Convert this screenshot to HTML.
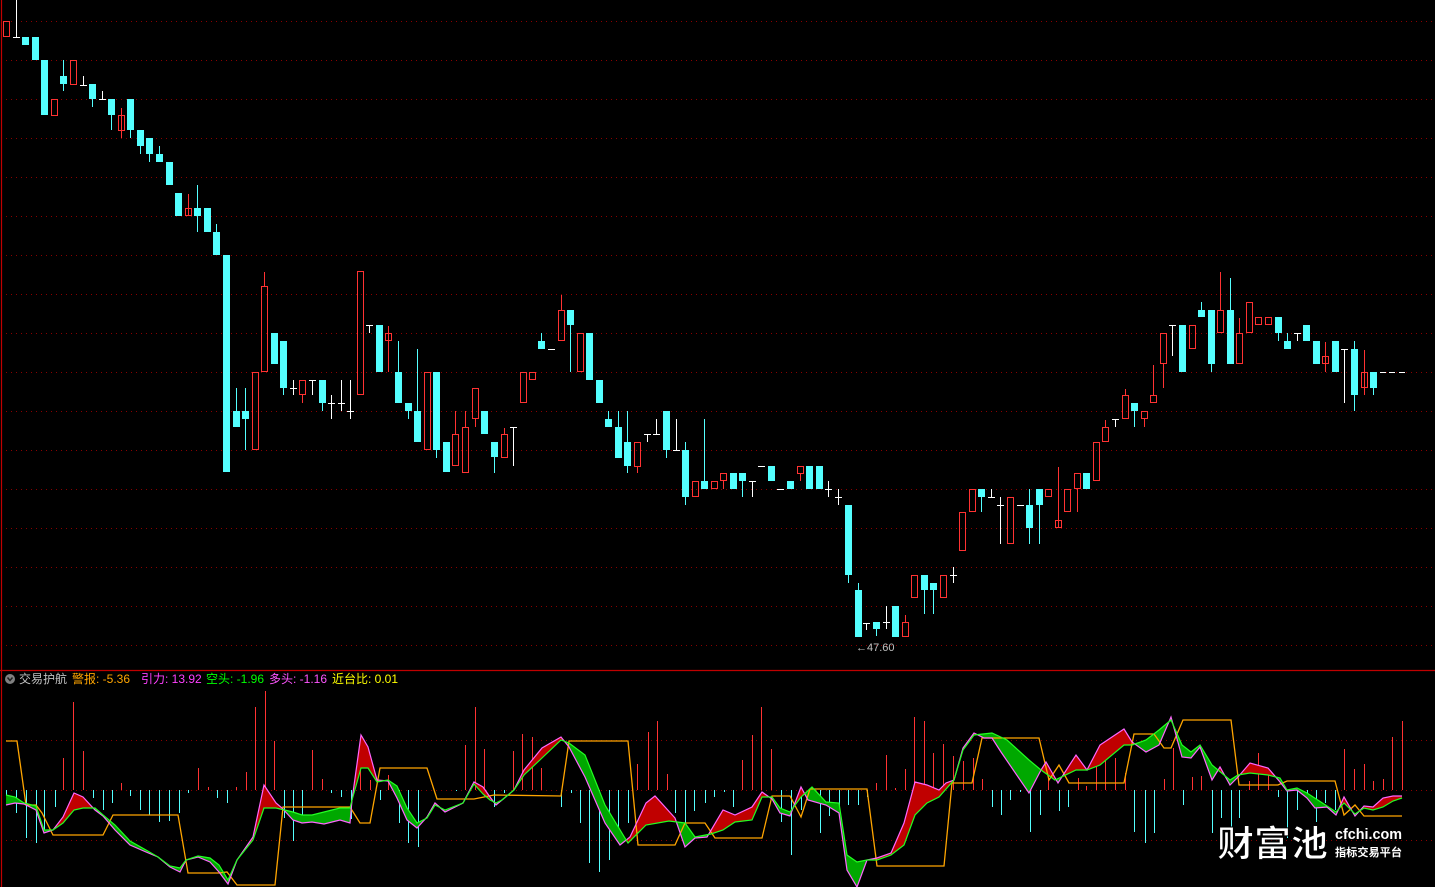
<!DOCTYPE html>
<html><head><meta charset="utf-8"><style>
html,body{margin:0;padding:0;background:#000;width:1435px;height:887px;overflow:hidden}
svg{display:block}
</style></head><body>
<svg width="1435" height="887" viewBox="0 0 1435 887" xmlns="http://www.w3.org/2000/svg">
<rect width="1435" height="887" fill="#000"/>
<g stroke="#8a0000" stroke-width="1" stroke-dasharray="1,4" fill="none">
<path d="M6 21.5H1435M6 60.5H1435M6 99.5H1435M6 138.5H1435M6 177.5H1435M6 216.5H1435M6 255.5H1435M6 294.5H1435M6 333.5H1435M6 372.5H1435M6 411.5H1435M6 450.5H1435M6 489.5H1435M6 528.5H1435M6 567.5H1435M6 606.5H1435M6 645.5H1435M6 740.5H1435M6 790.5H1435M6 840.5H1435"/>
</g>
<path d="M1.5 0V887M0 670.5H1435" stroke="#c00000" stroke-width="1.2" fill="none"/>

<g shape-rendering="crispEdges" fill="none" stroke-width="1">
<path stroke="#54ffff" d="M63.5 60V91M92.5 84V107M111.5 99V130M130.5 99V138M140.5 130V154M149.5 138V162M159.5 146V162M197.5 185V232M216.5 224V255M236.5 388V427M245.5 388V450M283.5 341V395M322.5 380V411M398.5 341V403M408.5 403V419M417.5 349V442M436.5 372V458M494.5 442V473M541.5 333V349M570.5 310V372M608.5 411V427M618.5 411V458M627.5 411V473M666.5 411V458M685.5 442V505M704.5 419V489M742.5 473V497M848.5 505V583M858.5 583V637M876.5 622V636M924.5 575V614M933.5 583V614M981.5 489V512M1029.5 489V544M1039.5 489V544M1134.5 403V427M1201.5 302V317M1211.5 310V372M1230.5 278V364M1278.5 317V341M1287.5 333V349M1354.5 341V411M1373.5 372V395"/>
<path stroke="#ff3232" d="M121.5 108V138M188.5 194V216M264.5 272V286M302.5 395V403M388.5 326V372M455.5 411V434M465.5 411V427M475.5 419V427M504.5 428V434M561.5 295V310M637.5 467V473M723.5 481V489M800.5 474V481M905.5 615V622M1058.5 467V528M1077.5 489V512M1105.5 420V427M1125.5 389V395M1144.5 419V427M1153.5 365V395M1163.5 364V388M1220.5 272V310M1239.5 318V333M1325.5 342V372M1364.5 350V395"/>
<path stroke="#ffffff" d="M16.5 0V37M13 37.5H20M83.5 76V85M80 85.5H87M102.5 91V99M99 99.5H106M293.5 380V395M290 388.5H297M312.5 380V395M309 380.5H316M331.5 395V419M328 403.5H335M341.5 380V411M338 403.5H345M350.5 380V419M347 411.5H354M369.5 325V333M366 325.5H373M513.5 427V466M510 427.5H517M548 349.5H555M647.5 434V442M644 434.5H651M656.5 419V434M653 434.5H660M676.5 419V450M673 450.5H680M752.5 481V497M749 481.5H756M758 466.5H765M777 489.5H784M828.5 481V497M825 489.5H832M838.5 489V505M835 497.5H842M866.5 623V630M863 623.5H870M886.5 606V629M883 622.5H890M953.5 567V583M950 575.5H957M991.5 489V497M988 497.5H995M1000.5 497V544M997 505.5H1004M1017 505.5H1024M1115.5 419V427M1112 419.5H1119M1172.5 325V356M1169 325.5H1176M1297.5 333V341M1294 333.5H1301M1344.5 349V403M1341 349.5H1348M1380 372.5H1386M1389 372.5H1395M1399 372.5H1405"/>
</g>
<g fill="#54ffff" shape-rendering="crispEdges">
<rect x="22" y="37" width="7" height="8"/><rect x="32" y="37" width="7" height="23"/><rect x="41" y="60" width="7" height="55"/><rect x="60" y="76" width="7" height="8"/><rect x="89" y="84" width="7" height="15"/><rect x="108" y="99" width="7" height="16"/><rect x="127" y="99" width="7" height="31"/><rect x="137" y="130" width="7" height="16"/><rect x="146" y="138" width="7" height="16"/><rect x="156" y="154" width="7" height="8"/><rect x="166" y="162" width="7" height="23"/><rect x="175" y="193" width="7" height="23"/><rect x="194" y="208" width="7" height="8"/><rect x="204" y="208" width="7" height="24"/><rect x="213" y="232" width="7" height="23"/><rect x="223" y="255" width="7" height="217"/><rect x="233" y="411" width="7" height="16"/><rect x="242" y="411" width="7" height="8"/><rect x="271" y="333" width="7" height="31"/><rect x="280" y="341" width="7" height="47"/><rect x="319" y="380" width="7" height="23"/><rect x="376" y="325" width="7" height="47"/><rect x="395" y="372" width="7" height="31"/><rect x="405" y="403" width="7" height="8"/><rect x="414" y="411" width="7" height="31"/><rect x="433" y="372" width="7" height="78"/><rect x="443" y="442" width="7" height="30"/><rect x="481" y="411" width="7" height="23"/><rect x="491" y="442" width="7" height="15"/><rect x="538" y="341" width="7" height="8"/><rect x="567" y="310" width="7" height="15"/><rect x="586" y="333" width="7" height="47"/><rect x="596" y="380" width="7" height="23"/><rect x="605" y="419" width="7" height="8"/><rect x="615" y="427" width="7" height="31"/><rect x="624" y="442" width="7" height="24"/><rect x="663" y="411" width="7" height="39"/><rect x="682" y="450" width="7" height="47"/><rect x="701" y="481" width="7" height="8"/><rect x="730" y="473" width="7" height="16"/><rect x="739" y="473" width="7" height="8"/><rect x="768" y="466" width="7" height="15"/><rect x="787" y="481" width="7" height="8"/><rect x="806" y="466" width="7" height="23"/><rect x="816" y="466" width="7" height="23"/><rect x="845" y="505" width="7" height="70"/><rect x="855" y="590" width="7" height="47"/><rect x="873" y="622" width="7" height="7"/><rect x="892" y="606" width="7" height="31"/><rect x="921" y="575" width="7" height="15"/><rect x="930" y="583" width="7" height="7"/><rect x="978" y="489" width="7" height="8"/><rect x="1026" y="505" width="7" height="23"/><rect x="1036" y="489" width="7" height="16"/><rect x="1083" y="473" width="7" height="16"/><rect x="1131" y="403" width="7" height="8"/><rect x="1179" y="325" width="7" height="47"/><rect x="1198" y="310" width="7" height="7"/><rect x="1208" y="310" width="7" height="54"/><rect x="1227" y="310" width="7" height="54"/><rect x="1275" y="317" width="7" height="16"/><rect x="1284" y="341" width="7" height="8"/><rect x="1303" y="325" width="7" height="16"/><rect x="1313" y="341" width="7" height="23"/><rect x="1332" y="341" width="7" height="31"/><rect x="1351" y="349" width="7" height="46"/><rect x="1370" y="372" width="7" height="16"/>
</g>
<g fill="none" stroke="#ff3232" stroke-width="1" shape-rendering="crispEdges">
<rect x="3.5" y="21.5" width="6" height="15"/><rect x="51.5" y="99.5" width="6" height="16"/><rect x="70.5" y="60.5" width="6" height="24"/><rect x="118.5" y="115.5" width="6" height="15"/><rect x="185.5" y="208.5" width="6" height="7"/><rect x="252.5" y="372.5" width="6" height="77"/><rect x="261.5" y="286.5" width="6" height="85"/><rect x="299.5" y="380.5" width="6" height="14"/><rect x="357.5" y="271.5" width="6" height="123"/><rect x="385.5" y="333.5" width="6" height="7"/><rect x="424.5" y="372.5" width="6" height="77"/><rect x="452.5" y="434.5" width="6" height="31"/><rect x="462.5" y="427.5" width="6" height="45"/><rect x="472.5" y="388.5" width="6" height="30"/><rect x="501.5" y="434.5" width="6" height="23"/><rect x="520.5" y="372.5" width="6" height="30"/><rect x="529.5" y="372.5" width="6" height="7"/><rect x="558.5" y="310.5" width="6" height="30"/><rect x="577.5" y="333.5" width="6" height="38"/><rect x="634.5" y="442.5" width="6" height="24"/><rect x="692.5" y="481.5" width="6" height="15"/><rect x="711.5" y="481.5" width="6" height="7"/><rect x="720.5" y="473.5" width="6" height="7"/><rect x="797.5" y="466.5" width="6" height="7"/><rect x="902.5" y="622.5" width="6" height="14"/><rect x="911.5" y="575.5" width="6" height="22"/><rect x="940.5" y="575.5" width="6" height="22"/><rect x="959.5" y="512.5" width="6" height="38"/><rect x="969.5" y="489.5" width="6" height="22"/><rect x="1007.5" y="497.5" width="6" height="46"/><rect x="1045.5" y="489.5" width="6" height="7"/><rect x="1055.5" y="520.5" width="6" height="7"/><rect x="1064.5" y="489.5" width="6" height="22"/><rect x="1074.5" y="473.5" width="6" height="15"/><rect x="1093.5" y="442.5" width="6" height="38"/><rect x="1102.5" y="427.5" width="6" height="14"/><rect x="1122.5" y="395.5" width="6" height="23"/><rect x="1141.5" y="411.5" width="6" height="7"/><rect x="1150.5" y="395.5" width="6" height="7"/><rect x="1160.5" y="333.5" width="6" height="30"/><rect x="1189.5" y="325.5" width="6" height="23"/><rect x="1217.5" y="310.5" width="6" height="22"/><rect x="1236.5" y="333.5" width="6" height="30"/><rect x="1246.5" y="302.5" width="6" height="30"/><rect x="1255.5" y="317.5" width="6" height="7"/><rect x="1265.5" y="317.5" width="6" height="7"/><rect x="1322.5" y="356.5" width="6" height="7"/><rect x="1361.5" y="372.5" width="6" height="15"/>
</g>
<text x="856" y="651" font-family="Liberation Sans, sans-serif" font-size="11" fill="#c0c0c0">←47.60</text>

<g stroke-width="1" fill="none" shape-rendering="crispEdges">
<path stroke="#ff3232" d="M63.5 790V758M73.5 790V702M83.5 790V751M121.5 790V783M198.5 790V768M208.5 790V787M236.5 790V787M246.5 790V772M255.5 790V707M265.5 790V691M274.5 790V741M312.5 790V750M322.5 790V779M360.5 790V753M370.5 790V780M388.5 790V775M465.5 790V745M475.5 790V707M484.5 790V749M513.5 790V751M522.5 790V734M532.5 790V737M541.5 790V768M637.5 790V764M648.5 790V732M657.5 790V721M667.5 790V774M742.5 790V760M752.5 790V735M761.5 790V707M771.5 790V749M876.5 790V783M886.5 790V755M895.5 790V788M905.5 790V769M914.5 790V717M924.5 790V721M933.5 790V753M943.5 790V744M953.5 790V756M963.5 790V761M973.5 790V758M982.5 790V779M1048.5 790V777M1078.5 790V778M1086.5 790V786M1096.5 790V761M1105.5 790V760M1115.5 790V758M1125.5 790V773M1164.5 790V779M1173.5 790V748M1192.5 790V777M1201.5 790V776M1249.5 790V781M1258.5 790V753M1268.5 790V768M1344.5 790V749M1354.5 790V769M1364.5 790V764M1373.5 790V781M1383.5 790V779M1392.5 790V737M1402.5 790V721"/>
<path stroke="#54ffff" d="M6.5 790V805M16.5 790V813M26.5 790V838M36.5 790V843M44.5 790V832M55.5 790V807M93.5 790V798M103.5 790V810M112.5 790V803M130.5 790V796M140.5 790V810M149.5 790V815M159.5 790V822M169.5 790V821M179.5 790V813M188.5 790V793M217.5 790V798M227.5 790V803M284.5 790V818M293.5 790V841M302.5 790V822M331.5 790V793M341.5 790V797M351.5 790V819M380.5 790V800M399.5 790V823M408.5 790V843M418.5 790V847M456.5 790V791M484.5 790V796M494.5 790V807M504.5 790V793M561.5 790V807M571.5 790V793M580.5 790V823M589.5 790V863M599.5 790V872M609.5 790V860M618.5 790V842M628.5 790V823M675.5 790V813M685.5 790V842M694.5 790V811M705.5 790V803M714.5 790V797M724.5 790V792M733.5 790V807M781.5 790V822M791.5 790V855M801.5 790V810M810.5 790V798M820.5 790V833M829.5 790V816M839.5 790V807M848.5 790V805M858.5 790V805M867.5 790V797M992.5 790V807M1001.5 790V815M1010.5 790V800M1020.5 790V792M1030.5 790V832M1040.5 790V815M1059.5 790V811M1068.5 790V807M1134.5 790V832M1145.5 790V843M1154.5 790V833M1183.5 790V805M1212.5 790V833M1221.5 790V818M1231.5 790V833M1239.5 790V818M1278.5 790V797M1287.5 790V838M1297.5 790V810M1307.5 790V797M1316.5 790V822M1325.5 790V803M1335.5 790V810"/>
</g>

<defs>
<clipPath id="above"><polygon points="0,680 6,795 15,797 24,803 36,806 44,830 53,830 63,823 74,810 83,808 95,808 103,815 115,825 130,841 146,850 158,857 170,866 180,868 186,860 198,856 210,858 219,865 228,880 237,860 253,840 264,808 276,808 293,812 302,815 312,815 324,812 340,808 350,808 352,800 361,768 368,768 377,782 388,780 397,786 407,808 417,823 427,818 435,805 445,810 463,803 474,784 483,794 490,800 496,803 502,800 514,790 524,775 542,758 561,740 569,743 585,755 605,805 628,843 646,825 669,821 685,823 695,837 711,834 723,830 735,822 752,820 762,797 772,797 780,808 790,812 801,797 812,787 826,802 839,803 847,855 857,862 867,860 877,860 891,855 904,845 915,815 927,803 939,797 954,780 963,750 974,735 992,733 1007,740 1029,760 1041,770 1055,780 1076,770 1087,770 1100,765 1124,745 1132,745 1146,740 1159,730 1171,720 1182,745 1191,752 1200,745 1212,765 1230,780 1238,775 1250,773 1268,775 1280,778 1287,790 1297,788 1307,793 1327,806 1336,812 1344,803 1355,814 1364,808 1373,810 1383,807 1393,801 1402,798 1435,680"/></clipPath>
<clipPath id="below"><polygon points="0,887 6,795 15,797 24,803 36,806 44,830 53,830 63,823 74,810 83,808 95,808 103,815 115,825 130,841 146,850 158,857 170,866 180,868 186,860 198,856 210,858 219,865 228,880 237,860 253,840 264,808 276,808 293,812 302,815 312,815 324,812 340,808 350,808 352,800 361,768 368,768 377,782 388,780 397,786 407,808 417,823 427,818 435,805 445,810 463,803 474,784 483,794 490,800 496,803 502,800 514,790 524,775 542,758 561,740 569,743 585,755 605,805 628,843 646,825 669,821 685,823 695,837 711,834 723,830 735,822 752,820 762,797 772,797 780,808 790,812 801,797 812,787 826,802 839,803 847,855 857,862 867,860 877,860 891,855 904,845 915,815 927,803 939,797 954,780 963,750 974,735 992,733 1007,740 1029,760 1041,770 1055,780 1076,770 1087,770 1100,765 1124,745 1132,745 1146,740 1159,730 1171,720 1182,745 1191,752 1200,745 1212,765 1230,780 1238,775 1250,773 1268,775 1280,778 1287,790 1297,788 1307,793 1327,806 1336,812 1344,803 1355,814 1364,808 1373,810 1383,807 1393,801 1402,798 1435,887"/></clipPath>
<polygon id="band" points="6,805 15,803 24,804 36,810 44,833 53,830 63,817 74,793 83,797 95,810 103,816 115,830 130,845 146,852 158,857 170,867 180,872 186,860 198,857 210,862 219,872 228,884 237,860 253,837 264,785 276,803 282,808 293,820 302,823 312,822 324,824 340,820 350,823 352,800 361,735 368,747 377,780 388,781 397,798 407,820 417,828 427,817 435,803 445,812 463,803 474,782 483,787 490,797 496,805 502,800 514,790 524,770 542,748 561,737 569,747 585,777 605,823 620,845 630,837 646,803 655,796 675,818 685,847 695,838 707,837 723,810 735,815 752,807 762,792 772,799 780,813 790,816 801,787 808,800 826,805 839,813 847,870 857,887 867,860 877,858 891,853 904,823 915,782 927,785 939,790 946,783 954,780 963,748 974,733 984,738 992,738 1001,752 1029,793 1041,770 1046,762 1058,783 1076,755 1087,770 1100,745 1124,729 1132,742 1146,752 1159,745 1171,717 1182,757 1191,758 1200,747 1212,780 1220,767 1230,785 1238,777 1250,763 1268,768 1280,782 1287,791 1297,790 1307,798 1315,808 1327,807 1336,815 1344,797 1355,816 1364,806 1373,807 1383,798 1393,796 1402,796 1402,798 1393,801 1383,807 1373,810 1364,808 1355,814 1344,803 1336,812 1327,806 1307,793 1297,788 1287,790 1280,778 1268,775 1250,773 1238,775 1230,780 1212,765 1200,745 1191,752 1182,745 1171,720 1159,730 1146,740 1132,745 1124,745 1100,765 1087,770 1076,770 1055,780 1041,770 1029,760 1007,740 992,733 974,735 963,750 954,780 939,797 927,803 915,815 904,845 891,855 877,860 867,860 857,862 847,855 839,803 826,802 812,787 801,797 790,812 780,808 772,797 762,797 752,820 735,822 723,830 711,834 695,837 685,823 669,821 646,825 628,843 605,805 585,755 569,743 561,740 542,758 524,775 514,790 502,800 496,803 490,800 483,794 474,784 463,803 445,810 435,805 427,818 417,823 407,808 397,786 388,780 377,782 368,768 361,768 352,800 350,808 340,808 324,812 312,815 302,815 293,812 276,808 264,808 253,840 237,860 228,880 219,865 210,858 198,856 186,860 180,868 170,866 158,857 146,850 130,841 115,825 103,815 95,808 83,808 74,810 63,823 53,830 44,830 36,806 24,803 15,797 6,795"/>
</defs>
<use href="#band" fill="#c00000" clip-path="url(#above)"/>
<use href="#band" fill="#00a800" clip-path="url(#below)"/>

<polyline fill="none" stroke="#ffa500" stroke-width="1.3" points="6,741 17,741 26,805 36,805 42,813 53,835 103,835 113,815 178,815 188,873 219,873 227,872 237,885 275,885 283,807 350,807 360,823 370,823 380,768 427,768 437,799 474,799 494,795 561,796 569,741 628,741 638,845 675,845 685,823 705,823 715,838 762,838 772,796 790,796 801,817 810,789 867,789 877,866 944,866 952,783 972,783 982,738 1039,738 1049,780 1059,765 1069,783 1124,783 1134,734 1154,734 1164,748 1171,748 1183,720 1231,720 1239,785 1278,785 1287,781 1335,781 1344,815 1355,805 1364,816 1402,816"/>
<polyline fill="none" stroke="#ff66ff" stroke-width="1.2" points="6,805 15,803 24,804 36,810 44,833 53,830 63,817 74,793 83,797 95,810 103,816 115,830 130,845 146,852 158,857 170,867 180,872 186,860 198,857 210,862 219,872 228,884 237,860 253,837 264,785 276,803 282,808 293,820 302,823 312,822 324,824 340,820 350,823 352,800 361,735 368,747 377,780 388,781 397,798 407,820 417,828 427,817 435,803 445,812 463,803 474,782 483,787 490,797 496,805 502,800 514,790 524,770 542,748 561,737 569,747 585,777 605,823 620,845 630,837 646,803 655,796 675,818 685,847 695,838 707,837 723,810 735,815 752,807 762,792 772,799 780,813 790,816 801,787 808,800 826,805 839,813 847,870 857,887 867,860 877,858 891,853 904,823 915,782 927,785 939,790 946,783 954,780 963,748 974,733 984,738 992,738 1001,752 1029,793 1041,770 1046,762 1058,783 1076,755 1087,770 1100,745 1124,729 1132,742 1146,752 1159,745 1171,717 1182,757 1191,758 1200,747 1212,780 1220,767 1230,785 1238,777 1250,763 1268,768 1280,782 1287,791 1297,790 1307,798 1315,808 1327,807 1336,815 1344,797 1355,816 1364,806 1373,807 1383,798 1393,796 1402,796"/>
<polyline fill="none" stroke="#22ff22" stroke-width="1.2" points="6,795 15,797 24,803 36,806 44,830 53,830 63,823 74,810 83,808 95,808 103,815 115,825 130,841 146,850 158,857 170,866 180,868 186,860 198,856 210,858 219,865 228,880 237,860 253,840 264,808 276,808 293,812 302,815 312,815 324,812 340,808 350,808 352,800 361,768 368,768 377,782 388,780 397,786 407,808 417,823 427,818 435,805 445,810 463,803 474,784 483,794 490,800 496,803 502,800 514,790 524,775 542,758 561,740 569,743 585,755 605,805 628,843 646,825 669,821 685,823 695,837 711,834 723,830 735,822 752,820 762,797 772,797 780,808 790,812 801,797 812,787 826,802 839,803 847,855 857,862 867,860 877,860 891,855 904,845 915,815 927,803 939,797 954,780 963,750 974,735 992,733 1007,740 1029,760 1041,770 1055,780 1076,770 1087,770 1100,765 1124,745 1132,745 1146,740 1159,730 1171,720 1182,745 1191,752 1200,745 1212,765 1230,780 1238,775 1250,773 1268,775 1280,778 1287,790 1297,788 1307,793 1327,806 1336,812 1344,803 1355,814 1364,808 1373,810 1383,807 1393,801 1402,798"/>

<circle cx="10" cy="679" r="5" fill="#808080"/>
<path d="M7.5 677.5L10 680.5L12.5 677.5" stroke="#202020" stroke-width="1.5" fill="none"/>
<text y="683" font-family="Liberation Sans, 'Noto Sans CJK SC', sans-serif" font-size="12"><tspan x="19" fill="#c0c0c0">交易护航</tspan><tspan x="72" fill="#ffa500">警报: -5.36</tspan><tspan x="141" fill="#ff40ff">引力: 13.92</tspan><tspan x="206" fill="#00ff00">空头: -1.96</tspan><tspan x="269" fill="#ff55ff">多头: -1.16</tspan><tspan x="332" fill="#ffff00">近台比: 0.01</tspan></text>

<text x="1217" y="856" font-family="'Noto Sans CJK SC', 'WenQuanYi Zen Hei', sans-serif" font-size="36" font-weight="bold" fill="#ffffff" stroke="#000" stroke-width="1" textLength="111" lengthAdjust="spacingAndGlyphs">财富池</text>
<text x="1335" y="839" font-family="Liberation Sans, sans-serif" font-size="15" font-weight="bold" fill="#ffffff" textLength="67" lengthAdjust="spacingAndGlyphs">cfchi.com</text>
<text x="1335" y="856" font-family="'Noto Sans CJK SC', sans-serif" font-size="11" font-weight="bold" fill="#ffffff" textLength="67" lengthAdjust="spacingAndGlyphs">指标交易平台</text>
</svg>
</body></html>
